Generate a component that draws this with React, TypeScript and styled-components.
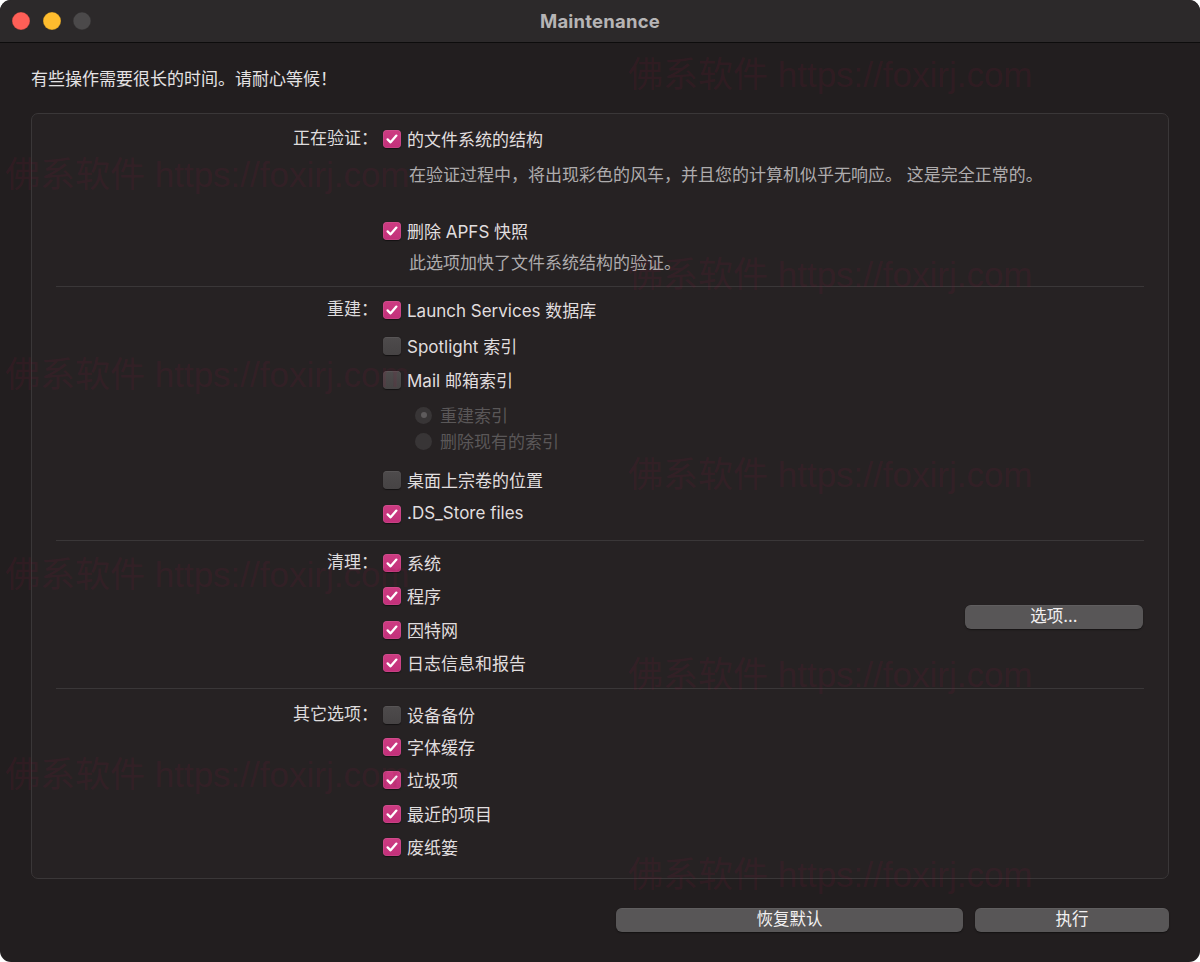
import React from "react";
import styled, { createGlobalStyle } from "styled-components";

const FONT = `"Inter", "Noto Sans CJK SC", "Noto Sans", sans-serif`;

const GlobalStyle = createGlobalStyle`
  html, body { margin: 0; padding: 0; background: #ffffff; }
  body { font-family: ${FONT}; -webkit-font-smoothing: antialiased; }
  * { box-sizing: border-box; }
`;

const Window = styled.div`
  position: relative;
  width: 1200px;
  height: 962px;
  background: #221e1f;
  border-radius: 11px;
  overflow: hidden;
  display: flex;
  flex-direction: column;
  font-family: ${FONT};
`;

const TitleBar = styled.div`
  height: 43px;
  flex: none;
  background: #2c292a;
  border-bottom: 1px solid #0d0c0c;
  display: grid;
  grid-template-columns: 1fr auto 1fr;
  align-items: center;
`;

const Lights = styled.div`
  display: flex;
  gap: 12.5px;
  padding-left: 12px;
`;

const Light = styled.span<{ $c: string }>`
  width: 18px;
  height: 18px;
  border-radius: 50%;
  background: ${(p) => p.$c};
  box-shadow: inset 0 0 0 0.5px rgba(0, 0, 0, 0.25);
`;

const Title = styled.div`
  font-size: 18.5px;
  font-weight: 700;
  color: #b6b4b5;
  letter-spacing: 0.2px;
  padding-bottom: 1px;
`;

const Body = styled.div`
  padding: 24px 31px 0;
  display: flex;
  flex-direction: column;
`;

const Intro = styled.div`
  font-size: 17px;
  line-height: 24px;
  height: 24px;
  color: #e4e2e3;
`;

const GroupBox = styled.div`
  margin-top: 22px;
  border: 1px solid #3a3738;
  border-radius: 7px;
  background: #262223;
  display: flex;
  flex-direction: column;
`;

const Section = styled.div<{ $pt: number; $pb: number }>`
  display: grid;
  grid-template-columns: 346px 1fr;
  column-gap: 5px;
  padding-top: ${(p) => p.$pt}px;
  padding-bottom: ${(p) => p.$pb}px;
`;

const SectionLabel = styled.div`
  text-align: right;
  height: 32px;
  line-height: 30px;
  font-size: 17px;
  color: #dedcdd;
  align-self: start;
`;

const Column = styled.div`
  display: flex;
  flex-direction: column;
`;

const SplitColumn = styled.div`
  display: flex;
  align-items: center;
  justify-content: space-between;
  padding-right: 25px;
`;

const Separator = styled.div`
  height: 1px;
  background: #3a3738;
  margin: 0 24px;
`;

const Row = styled.label<{ $mt?: number }>`
  display: flex;
  align-items: center;
  gap: 6px;
  height: 32px;
  padding-bottom: 2px;
  margin-top: ${(p) => p.$mt ?? 0}px;
  font-size: 17px;
  color: #e0dedf;
  white-space: nowrap;
`;

const Box = styled.span<{ $on: boolean }>`
  width: 18px;
  height: 18px;
  border-radius: 4px;
  flex: none;
  display: flex;
  align-items: center;
  justify-content: center;
  margin-top: 2px;
  background: ${(p) =>
    p.$on ? "linear-gradient(#cd3c82, #c2307a)" : "linear-gradient(#4e4b4c, #464344)"};
  box-shadow: ${(p) =>
    p.$on
      ? "inset 0 0 0 0.5px rgba(255,255,255,0.15), 0 0.5px 1px rgba(0,0,0,0.5)"
      : "inset 0 0.5px 0 rgba(255,255,255,0.12), 0 0.5px 1px rgba(0,0,0,0.5)"};
`;

const Desc = styled.div<{ $mt: number }>`
  margin-top: ${(p) => p.$mt}px;
  padding-left: 26px;
  height: 24px;
  line-height: 24px;
  font-size: 17px;
  color: #aeacad;
  white-space: nowrap;
`;

const RadioRow = styled.div<{ $mt?: number }>`
  display: flex;
  align-items: center;
  gap: 8px;
  height: 26px;
  padding-left: 32px;
  padding-bottom: 2px;
  margin-top: ${(p) => p.$mt ?? 0}px;
  font-size: 17px;
  color: #5a5758;
`;

const RadioDot = styled.span<{ $on: boolean }>`
  width: 17px;
  height: 17px;
  border-radius: 50%;
  background: #383536;
  display: flex;
  align-items: center;
  justify-content: center;
  margin-top: 2px;
  &::after {
    content: "";
    width: 6px;
    height: 6px;
    border-radius: 50%;
    background: ${(p) => (p.$on ? "#5e5b5c" : "transparent")};
  }
`;

const PushButton = styled.button<{ $w: number }>`
  width: ${(p) => p.$w}px;
  height: 24px;
  border: none;
  border-radius: 6px;
  background: #585657;
  color: #f2f0f1;
  font-family: ${FONT};
  font-size: 16.5px;
  line-height: 22px;
  padding: 0 0 2px;
  box-shadow: inset 0 0.5px 0 rgba(255, 255, 255, 0.1), 0 1px 1.5px rgba(0, 0, 0, 0.45);
`;

const OptionsButton = styled(PushButton)`
  margin-top: 8px;
`;

const ButtonRow = styled.div`
  display: flex;
  justify-content: flex-end;
  gap: 12px;
  margin-top: 29px;
`;

const Watermarks = styled.div`
  position: absolute;
  inset: 0;
  pointer-events: none;
`;

const Mark = styled.div<{ $x: number; $y: number }>`
  position: absolute;
  left: ${(p) => p.$x}px;
  top: ${(p) => p.$y - 20}px;
  height: 40px;
  line-height: 40px;
  font-family: "Liberation Sans", "Noto Sans CJK SC", sans-serif;
  font-size: 35px;
  color: rgba(140, 20, 60, 0.14);
  white-space: nowrap;
`;

const Check = () => (
  <svg width="14" height="14" viewBox="0 0 14 14">
    <path
      d="M2.6 7.4 L5.6 10.3 L11.4 3.6"
      fill="none"
      stroke="#ffffff"
      strokeWidth="2.3"
      strokeLinecap="round"
      strokeLinejoin="round"
    />
  </svg>
);

const CheckRow: React.FC<{ on: boolean; mt?: number; children: React.ReactNode }> = ({
  on,
  mt,
  children,
}) => (
  <Row $mt={mt}>
    <Box $on={on}>{on && <Check />}</Box>
    <span>{children}</span>
  </Row>
);

const marks = [
  { x: 628, y: 75 },
  { x: 5, y: 175 },
  { x: 628, y: 275 },
  { x: 5, y: 375 },
  { x: 628, y: 475 },
  { x: 5, y: 575 },
  { x: 628, y: 675 },
  { x: 5, y: 775 },
  { x: 628, y: 875 },
];

export default function App() {
  return (
    <>
      <GlobalStyle />
      <Window>
        <TitleBar>
          <Lights>
            <Light $c="#fe5f57" />
            <Light $c="#febc2e" />
            <Light $c="#4b494a" />
          </Lights>
          <Title>Maintenance</Title>
          <span />
        </TitleBar>
        <Body>
          <Intro>有些操作需要很长的时间。请耐心等候！</Intro>
          <GroupBox>
            <Section $pt={9} $pb={11}>
              <SectionLabel>正在验证：</SectionLabel>
              <Column>
                <CheckRow on>的文件系统的结构</CheckRow>
                <Desc $mt={8}>
                  在验证过程中，将出现彩色的风车，并且您的计算机似乎无响应。 这是完全正常的。
                </Desc>
                <CheckRow on mt={28}>
                  删除 APFS 快照
                </CheckRow>
                <Desc $mt={4}>此选项加快了文件系统结构的验证。</Desc>
              </Column>
            </Section>
            <Separator />
            <Section $pt={7} $pb={10}>
              <SectionLabel>重建：</SectionLabel>
              <Column>
                <CheckRow on>Launch Services 数据库</CheckRow>
                <CheckRow on={false} mt={4}>
                  Spotlight 索引
                </CheckRow>
                <CheckRow on={false} mt={2}>
                  Mail 邮箱索引
                </CheckRow>
                <RadioRow $mt={6}>
                  <RadioDot $on />
                  <span>重建索引</span>
                </RadioRow>
                <RadioRow>
                  <RadioDot $on={false} />
                  <span>删除现有的索引</span>
                </RadioRow>
                <CheckRow on={false} mt={10}>
                  桌面上宗卷的位置
                </CheckRow>
                <CheckRow on mt={2}>
                  .DS_Store files
                </CheckRow>
              </Column>
            </Section>
            <Separator />
            <Section $pt={6} $pb={9}>
              <SectionLabel>清理：</SectionLabel>
              <SplitColumn>
                <Column>
                  <CheckRow on>系统</CheckRow>
                  <CheckRow on mt={1}>
                    程序
                  </CheckRow>
                  <CheckRow on mt={2}>
                    因特网
                  </CheckRow>
                  <CheckRow on mt={1}>
                    日志信息和报告
                  </CheckRow>
                </Column>
                <OptionsButton $w={178}>选项...</OptionsButton>
              </SplitColumn>
            </Section>
            <Separator />
            <Section $pt={10} $pb={15}>
              <SectionLabel>其它选项：</SectionLabel>
              <Column>
                <CheckRow on={false}>设备备份</CheckRow>
                <CheckRow on>字体缓存</CheckRow>
                <CheckRow on mt={1}>
                  垃圾项
                </CheckRow>
                <CheckRow on mt={2}>
                  最近的项目
                </CheckRow>
                <CheckRow on mt={1}>
                  废纸篓
                </CheckRow>
              </Column>
            </Section>
          </GroupBox>
          <ButtonRow>
            <PushButton $w={347}>恢复默认</PushButton>
            <PushButton $w={194}>执行</PushButton>
          </ButtonRow>
        </Body>
        <Watermarks>
          {marks.map((m, i) => (
            <Mark key={i} $x={m.x} $y={m.y}>
              佛系软件 https://foxirj.com
            </Mark>
          ))}
        </Watermarks>
      </Window>
    </>
  );
}
